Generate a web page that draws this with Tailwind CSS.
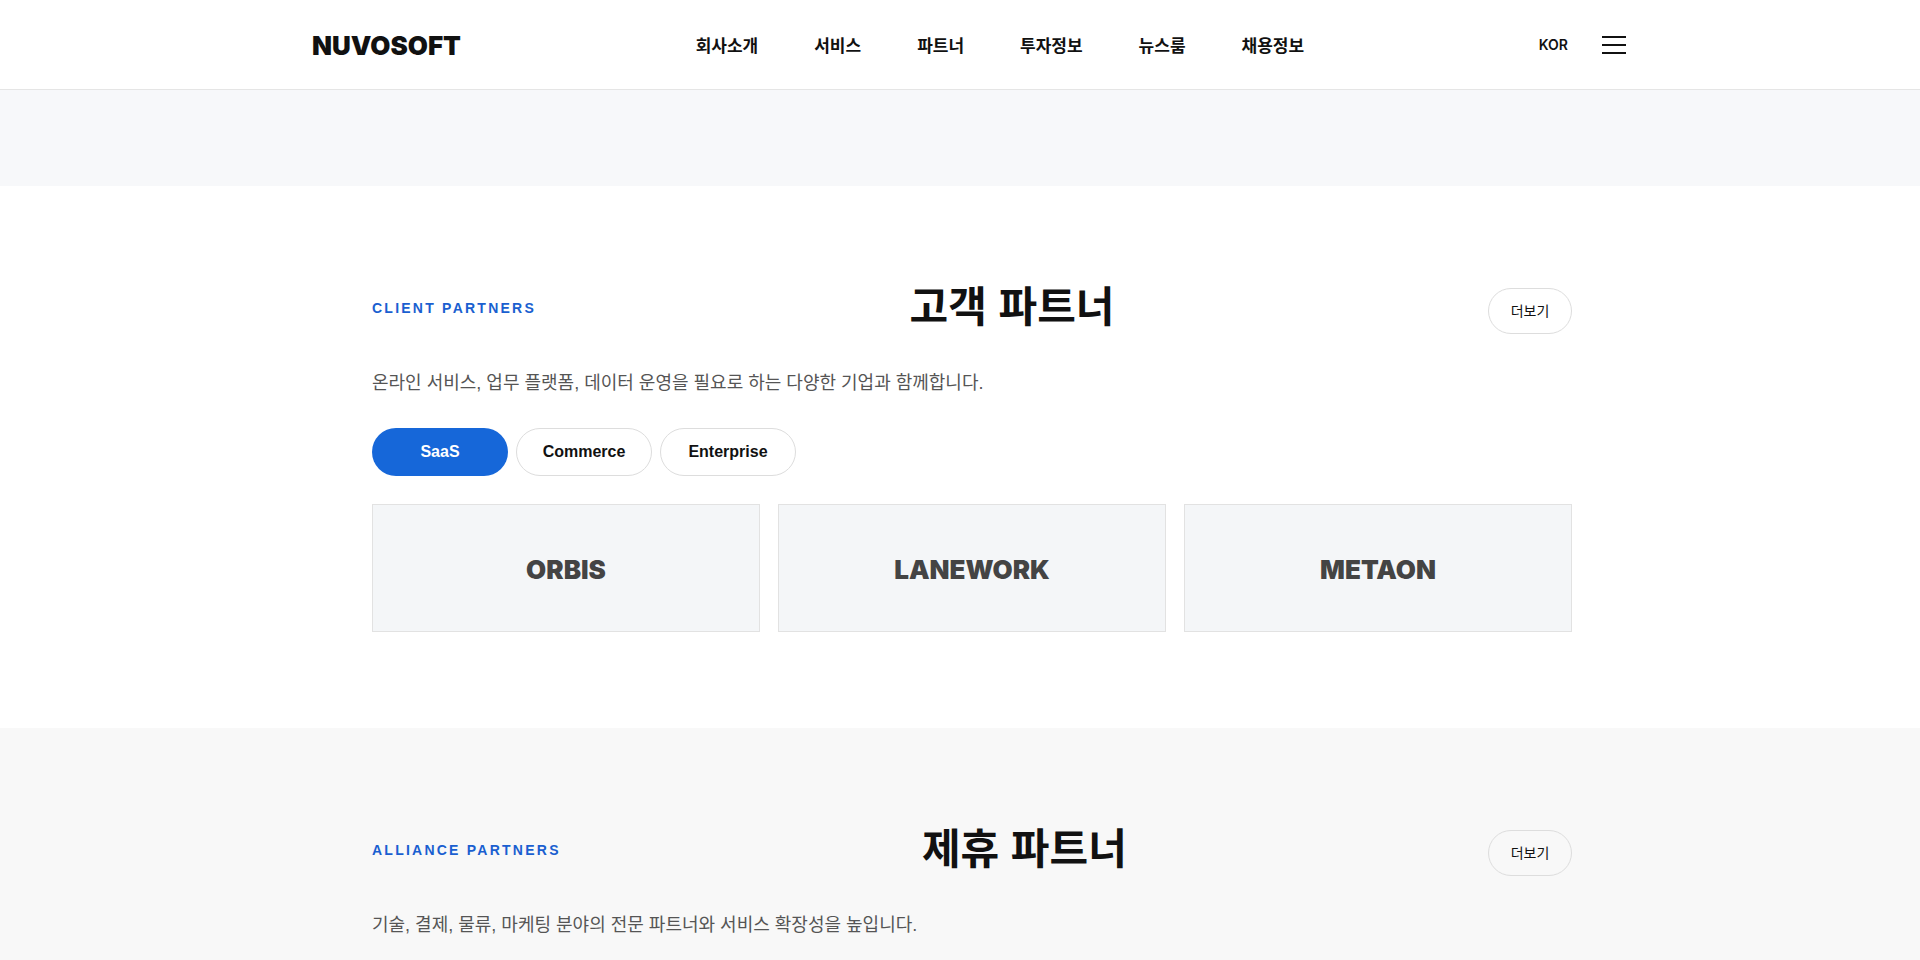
<!DOCTYPE html>
<html lang="ko">
<head>
    <meta charset="UTF-8">
    <meta name="viewport" content="width=device-width, initial-scale=1.0">
    <title>NUVOSOFT - 파트너</title>
    <script src="https://cdn.jsdelivr.net/npm/@tailwindcss/browser@4"></script>
    <style>
        body {
            font-family: 'Liberation Sans', 'Noto Sans CJK KR', sans-serif;
        }
    </style>
</head>
<body class="bg-white text-[#111111] overflow-x-hidden">
    <header class="h-[90px] pl-6 bg-white border-b border-[#e5e5e5]">
        <div class="max-w-[1320px] h-full mx-auto flex items-center justify-between">
            <a href="#" class="pt-0.5 font-[Inter] text-[26px] font-black">NUVOSOFT</a>
            <nav class="pt-1 flex gap-14 text-[17px] font-bold">
                <a href="#">회사소개</a>
                <a href="#">서비스</a>
                <a href="#">파트너</a>
                <a href="#">투자정보</a>
                <a href="#">뉴스룸</a>
                <a href="#">채용정보</a>
            </nav>
            <div class="flex items-center gap-7">
                <button type="button" class="font-[Inter] text-sm font-semibold">KOR</button>
                <button type="button" aria-label="메뉴" class="w-9 h-9 flex flex-col items-center justify-center gap-[6px]">
                    <span class="block w-6 h-[2px] bg-[#111111]"></span>
                    <span class="block w-6 h-[2px] bg-[#111111]"></span>
                    <span class="block w-6 h-[2px] bg-[#111111]"></span>
                </button>
            </div>
        </div>
    </header>

    <main>
        <div class="h-24 bg-[#f7f8fa]"></div>

        <!-- Client partners -->
        <section class="pl-6 py-24 bg-white">
            <div class="max-w-[1200px] mx-auto">
                <div class="flex items-center justify-between">
                    <p class="text-sm font-bold tracking-[0.16em] text-[#1a5fd0]">CLIENT PARTNERS</p>
                    <h2 class="text-[42px] leading-[52px] font-bold">고객 파트너</h2>
                    <a href="#" class="w-[84px] h-[46px] self-end flex items-center justify-center border border-[#dddddd] rounded-full text-sm">더보기</a>
                </div>
                <p class="mt-[34px] text-lg leading-[30px] text-[#555555]">온라인 서비스, 업무 플랫폼, 데이터 운영을 필요로 하는 다양한 기업과 함께합니다.</p>
                <div class="mt-[30px] flex gap-2 font-bold">
                    <button type="button" class="w-[136px] h-12 rounded-full bg-[#1667d9] text-white">SaaS</button>
                    <button type="button" class="w-[136px] h-12 rounded-full border border-[#dddddd]">Commerce</button>
                    <button type="button" class="w-[136px] h-12 rounded-full border border-[#dddddd]">Enterprise</button>
                </div>
                <div class="mt-7 grid grid-cols-3 gap-[18px] font-[Inter] text-[26px] font-black text-[#444444]">
                    <div class="h-32 pt-0.5 flex items-center justify-center bg-[#f4f6f8] border border-[#e2e2e2]">ORBIS</div>
                    <div class="h-32 pt-0.5 flex items-center justify-center bg-[#f4f6f8] border border-[#e2e2e2]">LANEWORK</div>
                    <div class="h-32 pt-0.5 flex items-center justify-center bg-[#f4f6f8] border border-[#e2e2e2]">METAON</div>
                </div>
            </div>
        </section>

        <!-- Alliance partners -->
        <section class="pl-6 pt-24 pb-5 bg-[#f8f8f8]">
            <div class="max-w-[1200px] mx-auto">
                <div class="flex items-center justify-between">
                    <p class="text-sm font-bold tracking-[0.16em] text-[#1a5fd0]">ALLIANCE PARTNERS</p>
                    <h2 class="text-[42px] leading-[52px] font-bold">제휴 파트너</h2>
                    <a href="#" class="w-[84px] h-[46px] self-end flex items-center justify-center border border-[#dddddd] rounded-full text-sm">더보기</a>
                </div>
                <p class="mt-[34px] text-lg leading-[30px] text-[#555555]">기술, 결제, 물류, 마케팅 분야의 전문 파트너와 서비스 확장성을 높입니다.</p>
            </div>
        </section>
    </main>
</body>
</html>
